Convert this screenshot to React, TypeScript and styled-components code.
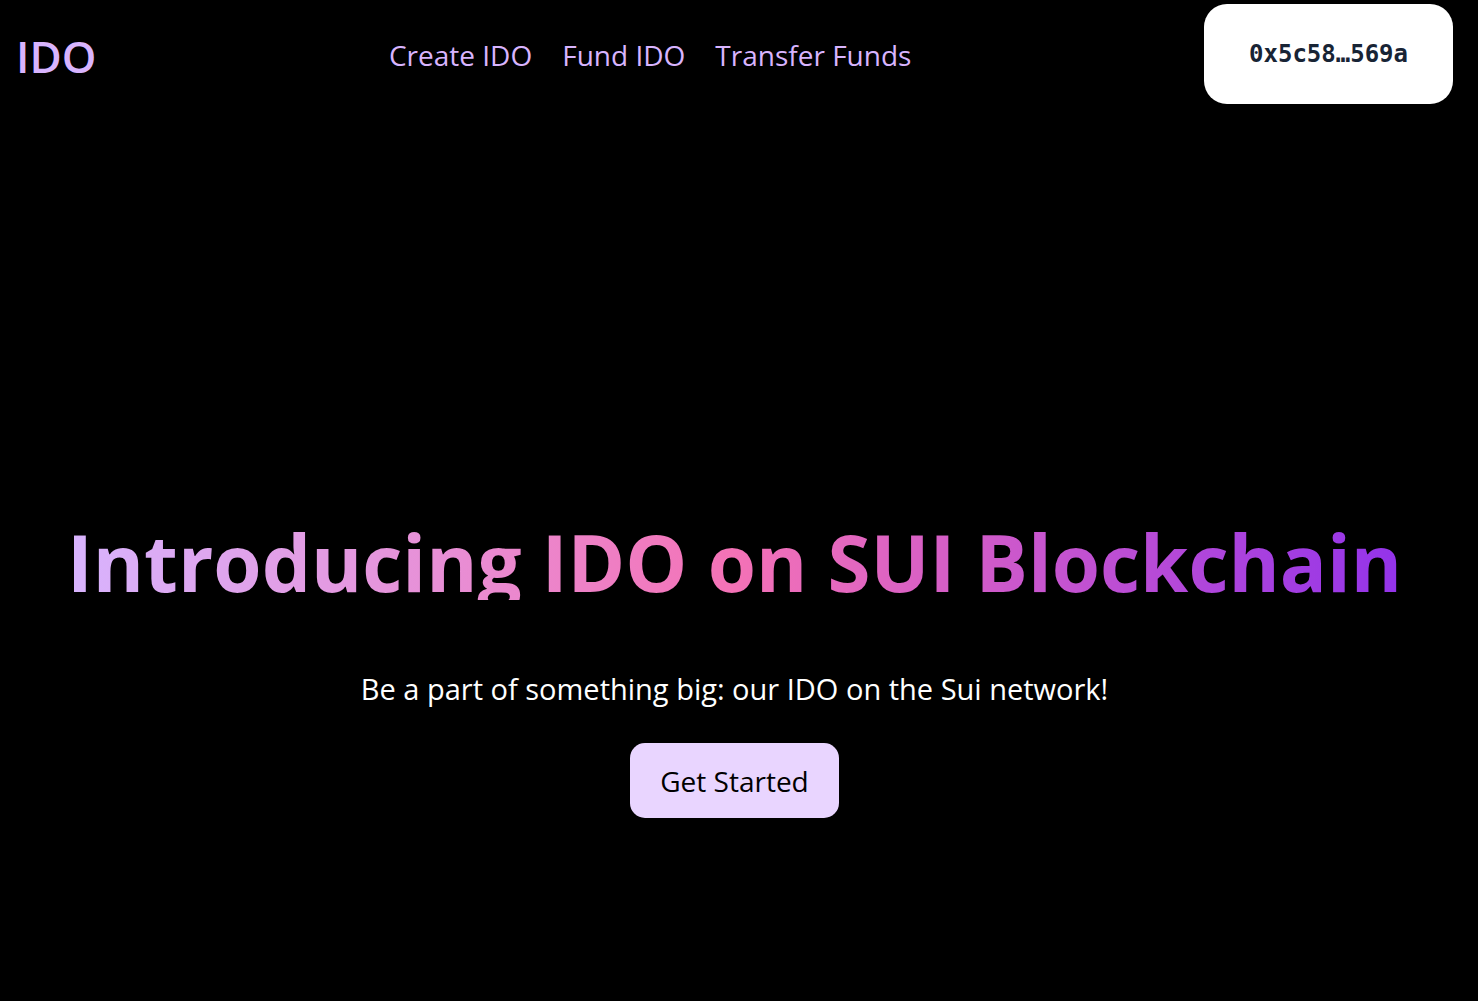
import React from "react";
import styled, { createGlobalStyle } from "styled-components";

const GlobalStyle = createGlobalStyle`
  *, *::before, *::after { box-sizing: border-box; }
  body {
    margin: 0;
    background: #000;
    font-family: "Open Sans", "Noto Sans", sans-serif;
  }
`;

const Page = styled.div`
  display: flex;
  flex-direction: column;
  min-height: 100vh;
  padding: 4px 25px 4px 16px;
  background: #000;
`;

const Header = styled.header`
  display: flex;
  align-items: center;
  justify-content: space-between;
`;

const Brand = styled.a`
  padding-top: 4px;
  color: #d8b4fe;
  font-size: 44px;
  line-height: 52px;
  font-weight: 600;
  text-decoration: none;
`;

const Nav = styled.nav`
  display: flex;
  gap: 30px;
  padding-top: 2px;
`;

const NavLink = styled.a`
  color: #d8b4fe;
  font-size: 28px;
  line-height: 44px;
  text-decoration: none;
`;

const WalletButton = styled.button`
  height: 100px;
  padding: 0 45px;
  border: 0;
  border-radius: 23px;
  background: #fff;
  color: #182435;
  font-family: "DejaVu Sans Mono", monospace;
  font-size: 24px;
  font-weight: 700;
  cursor: pointer;
`;

const Hero = styled.main`
  display: flex;
  flex: 1;
  flex-direction: column;
  align-items: center;
  justify-content: flex-end;
  padding-bottom: 179px;
  text-align: center;
`;

const Title = styled.h1`
  margin: 0 0 62px;
  background: linear-gradient(to right, #d8b4fe, #f472b6, #9333ea);
  background-clip: text;
  -webkit-background-clip: text;
  color: transparent;
  font-size: 78px;
  line-height: 76px;
  font-weight: 700;
`;

const Tagline = styled.p`
  margin: 0 0 28px;
  color: #fff;
  font-size: 29px;
  line-height: 53px;
`;

const StartButton = styled.button`
  height: 75px;
  padding: 0 30px;
  border: 0;
  border-radius: 15px;
  background: #e9d5ff;
  color: #000;
  font-family: inherit;
  font-size: 28px;
  cursor: pointer;
`;

export default function App() {
  return (
    <Page>
      <GlobalStyle />
      <Header>
        <Brand href="#">IDO</Brand>
        <Nav aria-label="Main">
          <NavLink href="#create">Create IDO</NavLink>
          <NavLink href="#fund">Fund IDO</NavLink>
          <NavLink href="#transfer">Transfer Funds</NavLink>
        </Nav>
        <WalletButton type="button">0x5c58…569a</WalletButton>
      </Header>
      <Hero>
        <Title>Introducing IDO on SUI Blockchain</Title>
        <Tagline>Be a part of something big: our IDO on the Sui network!</Tagline>
        <StartButton type="button">Get Started</StartButton>
      </Hero>
    </Page>
  );
}
